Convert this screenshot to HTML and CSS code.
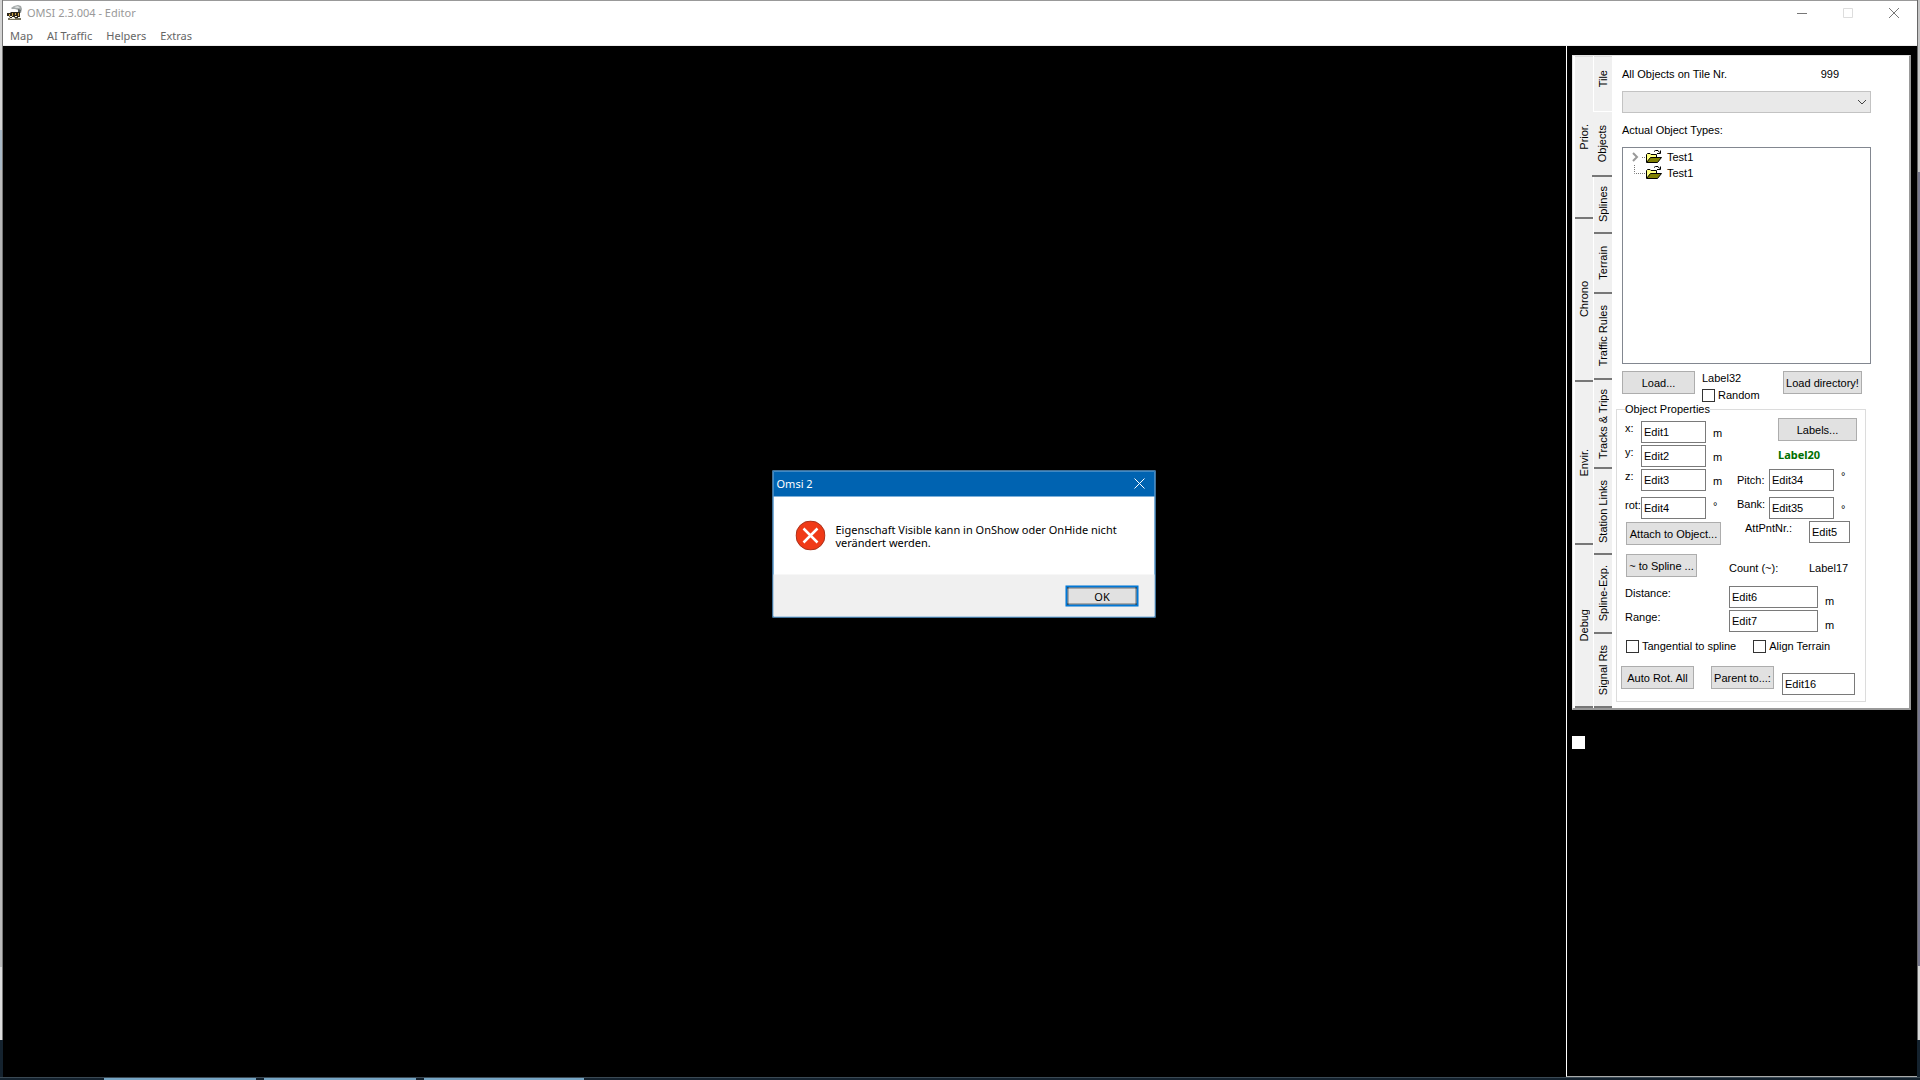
FILE: index.html
```html
<!DOCTYPE html>
<html lang="en">
<head>
    <meta charset="UTF-8">
    <meta name="viewport" content="width=device-width, initial-scale=1.0">
    <title>OMSI 2.3.004 - Editor</title>
    <link rel="stylesheet" href="styles.css">
</head>
<body>
    <div class="edge edge-left"></div>

    <div class="window">
        <header class="titlebar">
            <svg class="app-icon" viewBox="0 0 16 16" aria-hidden="true">
                <path d="M4 3 L7 1 L11 0 L14 1 L15 4 L14 8 L11 8 L11 5 L8 4 L5 4 Z" fill="#a3a8a8"/>
                <path d="M7 2 L11 1 L13 3 L9 3 Z" fill="#d8dcdc"/>
                <path d="M11 4 L14 5 L13 8 L11 8 Z" fill="#59605f"/>
                <path d="M0 8 H3 L4 7 H13 V12 H11 V13 H8 L7 12 H5 V13 H3 L2 11 H0 Z" fill="#2d261b"/>
                <path d="M2 9 h1 v2 h-1z M5 8 h1 v3 h-1z M8 8 h1 v2 h-1z M11 8 h1 v3 h-1z" fill="#cba548"/>
                <path d="M3 11 h2 v1 h-2z M8 11 h2 v1 h-2z" fill="#f3efdc"/>
                <path d="M1 13 H14 V15 H1 Z" fill="#77745e"/>
                <path d="M3 13 H8 V14 H3 Z" fill="#e9e6d4"/>
            </svg>
            <h1 class="title">OMSI 2.3.004 - Editor</h1>
            <div class="window-buttons">
                <button type="button" aria-label="Minimize"><svg viewBox="0 0 12 12"><path d="M1 6.5 H11" /></svg></button>
                <button type="button" class="faded" aria-label="Maximize" disabled><svg viewBox="0 0 12 12"><path d="M1.5 1.5 H10.5 V10.5 H1.5 Z"/></svg></button>
                <button type="button" aria-label="Close"><svg viewBox="0 0 12 12"><path d="M1 1 L11 11 M11 1 L1 11"/></svg></button>
            </div>
        </header>
        <nav class="menu">
            <button type="button">Map</button>
            <button type="button">AI Traffic</button>
            <button type="button">Helpers</button>
            <button type="button">Extras</button>
        </nav>

        <div class="workspace">
            <main class="viewport"></main>

            <aside class="sidebar">
                <div class="panel">
                    <div class="tabs tabs-outer">
                        <button type="button"><span>Prior.</span></button>
                        <button type="button"><span>Chrono</span></button>
                        <button type="button"><span>Envir.</span></button>
                        <button type="button"><span>Debug</span></button>
                    </div>
                    <div class="tabs tabs-inner">
                        <button type="button"><span>Tile</span></button>
                        <button type="button" class="active"><span>Objects</span></button>
                        <button type="button"><span>Splines</span></button>
                        <button type="button"><span>Terrain</span></button>
                        <button type="button"><span>Traffic Rules</span></button>
                        <button type="button"><span>Tracks &amp; Trips</span></button>
                        <button type="button"><span>Station Links</span></button>
                        <button type="button"><span>Spline-Exp.</span></button>
                        <button type="button"><span>Signal Rts</span></button>
                    </div>

                    <div class="page">
                        <div class="tile-row">
                            <label for="tile-objects">All Objects on Tile Nr.</label>
                            <span>999</span>
                        </div>
                        <div class="select">
                            <select id="tile-objects" disabled><option></option></select>
                            <svg viewBox="0 0 10 6" aria-hidden="true"><path d="M1 1 L5 5 L9 1"/></svg>
                        </div>
                        <p class="tree-title">Actual Object Types:</p>
                        <ul class="tree">
                            <li>
                                <svg class="branch" viewBox="0 0 16 16"><path class="chevron" d="M3 4 L7 8 L3 12"/><path class="dots" d="M12 8.5 H16"/></svg>
                                <svg class="folder" viewBox="0 0 16 16"><use href="#folder"/></svg>
                                <span>Test1</span>
                            </li>
                            <li>
                                <svg class="branch" viewBox="0 0 16 16"><path class="dots" d="M4.500 0 V8.500 H16"/></svg>
                                <svg class="folder" viewBox="0 0 16 16"><use href="#folder"/></svg>
                                <span>Test1</span>
                            </li>
                        </ul>

                        <div class="load-row">
                            <button type="button" class="btn load">Load...</button>
                            <div class="load-options">
                                <span>Label32</span>
                                <label class="check"><input type="checkbox">Random</label>
                            </div>
                            <button type="button" class="btn load-dir">Load directory!</button>
                        </div>

                        <fieldset class="props">
                            <legend>Object Properties</legend>

                            <div class="coords">
                                <div class="coords-left">
                                    <div class="field"><label for="x">x:</label><input type="text" id="x" value="Edit1"><span>m</span></div>
                                    <div class="field"><label for="y">y:</label><input type="text" id="y" value="Edit2"><span>m</span></div>
                                    <div class="field"><label for="z">z:</label><input type="text" id="z" value="Edit3"><span>m</span></div>
                                    <div class="field rot"><label for="rot">rot:</label><input type="text" id="rot" value="Edit4"><span class="deg">°</span></div>
                                </div>
                                <div class="coords-right">
                                    <button type="button" class="btn labels">Labels...</button>
                                    <strong class="object-name">Label20</strong>
                                    <div class="angle"><label for="pitch">Pitch:</label><input type="text" id="pitch" value="Edit34"><span class="deg">°</span></div>
                                    <div class="angle bank"><label for="bank">Bank:</label><input type="text" id="bank" value="Edit35"><span class="deg">°</span></div>
                                </div>
                            </div>

                            <div class="attach-row">
                                <button type="button" class="btn attach">Attach to Object...</button>
                                <label for="attpnt">AttPntNr.:</label>
                                <input type="text" id="attpnt" value="Edit5">
                            </div>
                            <div class="spline-row">
                                <button type="button" class="btn spline">~ to Spline ...</button>
                                <span class="count">Count (~):</span>
                                <span>Label17</span>
                            </div>
                            <div class="range-row"><label for="distance">Distance:</label><input type="text" id="distance" value="Edit6"><span>m</span></div>
                            <div class="range-row"><label for="range">Range:</label><input type="text" id="range" value="Edit7"><span>m</span></div>
                            <div class="check-row">
                                <label class="check"><input type="checkbox">Tangential to spline</label>
                                <label class="check"><input type="checkbox">Align Terrain</label>
                            </div>
                            <div class="parent-row">
                                <button type="button" class="btn auto-rot">Auto Rot. All</button>
                                <button type="button" class="btn parent">Parent to...:</button>
                                <input type="text" aria-label="Parent" value="Edit16">
                            </div>
                        </fieldset>
                    </div>
                </div>
                <input type="checkbox" class="loose-check" aria-label="Option">
            </aside>
        </div>
    </div>

    <div class="edge edge-right"></div>

    <footer class="taskbar">
        <span></span><span></span><span></span>
    </footer>

    <div class="dialog" role="alertdialog" aria-labelledby="dialog-title" aria-describedby="dialog-text">
        <div class="dialog-title">
            <h2 id="dialog-title">Omsi 2</h2>
            <button type="button" aria-label="Close"><svg viewBox="0 0 12 12"><path d="M1 1 L11 11 M11 1 L1 11"/></svg></button>
        </div>
        <div class="dialog-body">
            <svg class="error-icon" viewBox="0 0 30 30" aria-hidden="true">
                <circle cx="15" cy="15" r="14.500" fill="#f03a17" stroke="#a8321c"/>
                <path d="M8 8 L22 22 M22 8 L8 22" stroke="#fff" stroke-width="2.500"/>
            </svg>
            <p id="dialog-text">Eigenschaft Visible kann in OnShow oder OnHide nicht verändert werden.</p>
        </div>
        <div class="dialog-footer">
            <button type="button">OK</button>
        </div>
    </div>

    <!-- shared open folder symbol -->
    <svg class="symbols" aria-hidden="true">
        <symbol id="folder" viewBox="0 0 16 16">
            <path d="M.5 13 V5.500 L1.500 4.500 H4 L5 5.500 H10.500 V8" fill="#ffff80" stroke="#000"/>
            <path d="M.5 13.500 L4.500 8.500 H15.500 L11.500 13.500 Z" fill="#808000" stroke="#000"/>
            <path d="M8 2.500 L9.500 1.500 H12 L13.500 3.500 M11 4.500 H14.500 V1.500" fill="none" stroke="#000"/>
        </symbol>
    </svg>
</body>
</html>
```
FILE: styles.css
```css
* {
    box-sizing: border-box;
}
body {
    margin: 0;
    min-height: 100vh;
    display: grid;
    grid-template-columns: 3px 1fr 3px;
    grid-template-rows: 1fr 3px;
    background-color: #14222e;
    font-family: "Liberation Sans", Arial, sans-serif;
    font-size: 11px;
    line-height: 14px;
    color: #000;
}
h1, h2, p, ul {
    margin: 0;
    padding: 0;
    font-size: inherit;
    font-weight: normal;
}
button, input, select {
    font: inherit;
    color: inherit;
}

/* strips of the windows behind */
.edge {
    margin-bottom: 37px;
}
.edge-left {
    border-right: 1px solid #777;
    background: linear-gradient(#d4d4d4 130px, #a9b9c6 130px, #a9b9c6 170px, #bbb 170px, #bbb 967px, #ddd 967px);
}
.edge-right {
    border-left: 1px solid #666;
    background: linear-gradient(#c6c6c6 172px, #77778c 172px, #77778c 966px, #d8d8d8 966px);
}
.taskbar {
    grid-column: 1 / -1;
    display: flex;
    padding-left: 104px;
    border-top: 1px solid #3b4954;
}
.taskbar span {
    width: 152px;
    margin-right: 8px;
    background-color: #76a5c4;
}
.taskbar span:last-child {
    width: 160px;
}

.window {
    display: flex;
    flex-direction: column;
    background-color: #000;
}
.titlebar {
    display: flex;
    align-items: center;
    height: 26px;
    padding: 0 0 2px 4px;
    border-top: 1px solid #999;
    background-color: #fff;
    font-family: "Noto Sans", sans-serif;
    color: #999;
}
.app-icon {
    width: 16px;
    height: 16px;
    margin-right: 4px;
}
.title {
    flex: 1;
}
.window-buttons {
    display: flex;
}
.window-buttons button {
    width: 46px;
    height: 24px;
    padding: 0;
    border: none;
    background: none;
}
.window-buttons svg {
    width: 12px;
    height: 12px;
    display: block;
    margin: auto;
    fill: none;
    stroke: #777;
}
.window-buttons .faded svg {
    stroke: #ddd;
}
.menu {
    display: flex;
    height: 20px;
    background-color: #fff;
    border-bottom: 1px solid #eee;
    font-family: "Noto Sans", sans-serif;
    color: #666;
}
.menu button {
    padding: 0 7px;
    border: none;
    background: none;
}

.workspace {
    flex: 1;
    display: flex;
}
.viewport {
    flex: 1;
}
.sidebar {
    width: 351px;
    padding: 9px 6px 0 5px;
    border-left: 1px solid #fff;
    border-bottom: 1px solid #aaa;
}
.panel {
    display: flex;
    padding-left: 2px;
    background-color: #fff;
    border: 1px solid #e3e3e3;
    border-right: 2px solid #999;
    border-bottom: 2px solid #999;
}

/* vertical tabs */
.tabs {
    display: grid;
    width: 18px;
    margin-right: 1px;
}
.tabs-outer {
    grid-template-rows: repeat(4, 1fr);
}
.tabs-inner {
    grid-template-rows: 56fr 65fr 57fr 60fr 86fr 89fr 86fr 79fr 74fr;
}
.tabs button {
    display: flex;
    align-items: center;
    justify-content: center;
    padding: 0;
    border: none;
    border-bottom: 2px solid #777;
    background-color: #f0f0f0;
}
.tabs button:first-child {
    border-top: 1px solid #ddd;
}
.tabs-inner button:first-child {
    padding-bottom: 10px;
    border-bottom: 1px solid #fff;
}
.tabs .active {
    margin-left: -2px;
}
.tabs span {
    writing-mode: vertical-rl;
    transform: rotate(180deg);
    white-space: nowrap;
}

.page {
    flex: 1;
    padding: 10px 38px 6px 3px;
}
.tile-row {
    display: flex;
    justify-content: space-between;
    padding: 1px 32px 10px 6px;
}
.select {
    position: relative;
    margin-left: 6px;
}
.select select {
    display: block;
    width: 100%;
    height: 22px;
    border: 1px solid #aaa;
    background-color: #e1e1e1;
    appearance: none;
}
.select svg {
    position: absolute;
    right: 4px;
    top: 8px;
    width: 10px;
    height: 6px;
    fill: none;
    stroke: #444;
}
.tree-title {
    padding: 10px 6px;
}
.tree {
    height: 217px;
    margin-left: 6px;
    padding: 1px 7px;
    border: 1px solid #828790;
    list-style: none;
}
.tree li {
    display: flex;
    align-items: center;
    height: 16px;
}
.tree svg {
    width: 16px;
    height: 16px;
    fill: none;
}
.tree .chevron {
    stroke: #999;
    stroke-width: 2;
}
.tree .dots {
    stroke: #777;
    stroke-dasharray: 1 1;
}
.tree span {
    margin-left: 5px;
}
.symbols {
    position: absolute;
    width: 0;
    height: 0;
}

.btn {
    height: 23px;
    padding: 0;
    border: 1px solid #adadad;
    background-color: #e1e1e1;
    white-space: nowrap;
}
input[type="text"] {
    height: 22px;
    padding: 0 2px;
    border: 1px solid #7a7a7a;
    background-color: #fff;
}
input[type="checkbox"] {
    appearance: none;
    width: 13px;
    height: 13px;
    margin: 0;
    border: 1px solid #333;
    background-color: #fff;
}
.check {
    display: flex;
    align-items: center;
    gap: 3px;
}

.load-row {
    display: flex;
    align-items: flex-start;
    padding: 7px 9px 0 6px;
}
.load {
    width: 73px;
    margin-right: 7px;
}
.load-options {
    flex: 1;
}
.load-options .check {
    margin-top: 3px;
}
.load-dir {
    width: 79px;
}

.props {
    margin: 0 5px 0 0;
    padding: 2px 8px 6px 8px;
    border: 1px solid #dcdcdc;
}
.props legend {
    padding: 0;
}
.coords {
    display: flex;
}
.coords-left {
    width: 112px;
    padding-top: 3px;
}
.field {
    display: flex;
    align-items: flex-start;
    margin-bottom: 2px;
}
.field label {
    width: 16px;
}
.field input {
    width: 65px;
}
.field span {
    margin: 5px 0 0 7px;
}
.rot {
    margin: 6px 0 0;
}
.rot label {
    padding-top: 1px;
}
.field .deg {
    margin-top: 2px;
}
.coords-right {
    flex: 1;
}
.labels {
    display: block;
    width: 79px;
    margin-left: auto;
}
.object-name {
    display: block;
    margin: 7px 0 7px 41px;
    font-family: "Noto Sans", sans-serif;
    color: #007000;
}
.angle {
    display: flex;
    align-items: flex-start;
}
.angle label {
    width: 32px;
    padding-top: 4px;
}
.angle input {
    width: 65px;
}
.angle .deg {
    margin-left: 7px;
}
.bank {
    margin-top: 6px;
}
.bank label {
    padding-top: 0;
}
.bank .deg {
    margin-top: 5px;
}
.attach-row, .spline-row {
    display: flex;
    align-items: flex-start;
    padding: 2px 0 0 1px;
}
.attach {
    width: 95px;
    margin: 1px 24px 0 0;
}
.attach-row label {
    width: 64px;
}
.attach-row input {
    width: 41px;
}
.spline-row {
    padding: 9px 0 9px 1px;
}
.spline-row span {
    padding-top: 7px;
}
.spline {
    width: 71px;
    margin-right: 32px;
}
.count {
    width: 80px;
    white-space: nowrap;
}
.range-row {
    display: flex;
    align-items: flex-start;
    margin-bottom: 2px;
}
.range-row label {
    width: 104px;
}
.range-row input {
    width: 89px;
}
.range-row span {
    margin: 8px 0 0 7px;
}
.check-row {
    display: flex;
    gap: 17px;
    padding: 5px 0 13px 1px;
}
.check-row .check {
    white-space: nowrap;
}
.parent-row {
    display: flex;
    align-items: flex-start;
    margin-left: -4px;
}
.auto-rot {
    width: 73px;
    margin-right: 17px;
}
.parent {
    width: 63px;
    margin-right: 8px;
}
.parent-row input {
    width: 73px;
    margin-top: 7px;
}
.sidebar .loose-check {
    display: block;
    margin: 26px 0 0;
    border-color: #fff;
}

/* error message */
.dialog {
    position: absolute;
    left: 50%;
    top: 50%;
    transform: translate(-50%, -50%);
    width: 383px;
    margin: 4px 0 0 4px;
    border: 1px solid #0063b1;
    background-color: #fff;
    font-family: "Noto Sans", sans-serif;
}
.dialog-title {
    display: flex;
    align-items: center;
    justify-content: space-between;
    height: 25px;
    padding: 0 9px 1px 3px;
    background-color: #0063b1;
    color: #fff;
}
.dialog-title button {
    padding: 0;
    border: none;
    background: none;
}
.dialog-title svg {
    display: block;
    width: 12px;
    height: 12px;
    stroke: #fff;
}
.dialog-body {
    display: flex;
    gap: 10px;
    padding: 24px 22px 24px;
}
.error-icon {
    width: 30px;
    height: 30px;
    flex: none;
}
.dialog-body p {
    padding-top: 2px;
    line-height: 13px;
}
.dialog-footer {
    display: flex;
    justify-content: flex-end;
    padding: 11px 16px 10px;
    background-color: #f0f0f0;
}
.dialog-footer button {
    width: 73px;
    height: 21px;
    padding: 0;
    border: 2px solid #0078d7;
    background-color: #e1e1e1;
    outline: 1px dotted #000;
    outline-offset: -3px;
}
```
